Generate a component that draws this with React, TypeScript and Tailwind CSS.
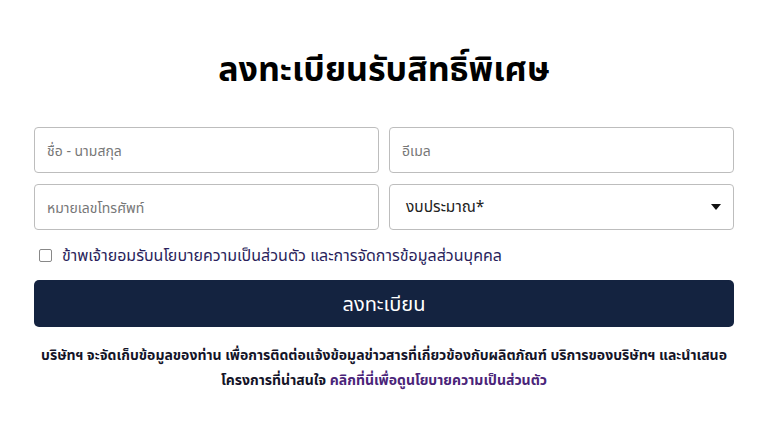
export default function App() {
  return (
    <div className="min-h-[442px] w-full bg-white px-[34px] pt-[44px] font-['Noto_Sans','Noto_Sans_Thai',sans-serif]">
      <h1 className="text-center text-[34px] font-bold leading-[48px] text-black">ลงทะเบียนรับสิทธิ์พิเศษ</h1>

      <form className="mt-[35px] flex flex-col">
        <div className="grid grid-cols-2 gap-x-[10px] gap-y-[11px]">
          <input
            type="text"
            placeholder="ชื่อ - นามสกุล"
            className="h-[46px] rounded-[4px] border border-[#bdbdbd] px-[12px] text-[14px] text-[#333] outline-none placeholder:text-[#777]"
          />
          <input
            type="email"
            placeholder="อีเมล"
            className="h-[46px] rounded-[4px] border border-[#bdbdbd] px-[12px] text-[14px] text-[#333] outline-none placeholder:text-[#777]"
          />
          <input
            type="tel"
            placeholder="หมายเลขโทรศัพท์"
            className="h-[46px] rounded-[4px] border border-[#bdbdbd] px-[12px] text-[14px] text-[#333] outline-none placeholder:text-[#777]"
          />
          <div className="flex h-[46px] items-center justify-between rounded-[4px] border border-[#bdbdbd] pl-[16px] pr-[12px]">
            <span className="text-[15.5px] text-[#222]">งบประมาณ*</span>
            <svg width="10" height="6" viewBox="0 0 10 6">
              <path d="M0 0h10L5 6z" fill="#111" />
            </svg>
          </div>
        </div>

        <label className="mt-[15px] flex items-center gap-[10px] pl-[5px]">
          <span className="h-[13px] w-[13px] rounded-[2px] border border-[#888] bg-white" />
          <span className="text-[16px] leading-[20px] text-[#2a1f5c]">ข้าพเจ้ายอมรับนโยบายความเป็นส่วนตัว และการจัดการข้อมูลส่วนบุคคล</span>
        </label>

        <button
          type="button"
          className="mt-[15px] h-[47px] w-full rounded-[5px] bg-[#142340] text-[20px] text-white"
        >
          ลงทะเบียน
        </button>
      </form>

      <p className="mt-[15px] text-center text-[14px] font-bold leading-[25px] text-[#141428]">
        บริษัทฯ จะจัดเก็บข้อมูลของท่าน เพื่อการติดต่อแจ้งข้อมูลข่าวสารที่เกี่ยวข้องกับผลิตภัณฑ์ บริการของบริษัทฯ และนำเสนอ
        <br />
        โครงการที่น่าสนใจ <a className="text-[#4a2479]">คลิกที่นี่เพื่อดูนโยบายความเป็นส่วนตัว</a>
      </p>
    </div>
  );
}
